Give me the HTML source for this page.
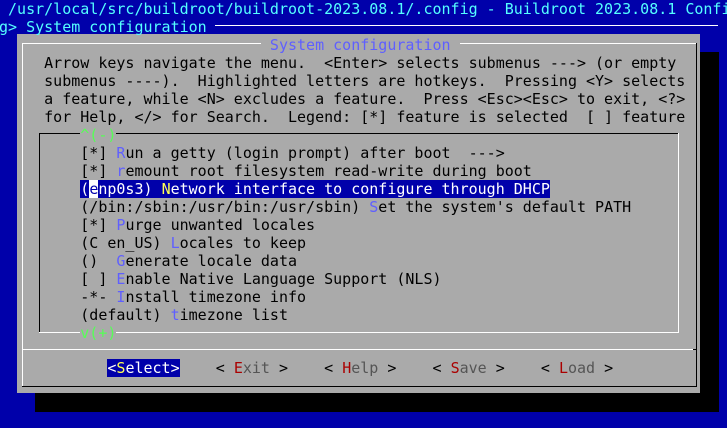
<!DOCTYPE html>
<html><head><meta charset="utf-8"><style>
body{margin:0;width:727px;height:428px;background:#0000aa;position:relative;overflow:hidden;font-family:"DejaVu Sans Mono","Liberation Mono",monospace;font-size:15px;}
.r{position:absolute;left:-1px;white-space:pre;line-height:18px;height:18px;margin:0;color:#000;}
.c{color:#55ffff}
.h{color:#5f5fff}
.g{color:#55ff55}
.w{color:#fff}
.y{color:#ffff55}
.red{color:#aa0000}
.dg{color:#555}
.box{position:absolute}
</style></head><body>
<div class="box" style="left:35px;top:52px;width:684px;height:360px;background:#000"></div>
<div class="box" style="left:17px;top:34px;width:683px;height:359px;background:#aaa"></div>
<div class="box" style="left:22px;top:43px;width:674px;height:1px;background:#fff"></div>
<div class="box" style="left:22px;top:43px;width:1px;height:343px;background:#fff"></div>
<div class="box" style="left:22px;top:386px;width:675px;height:1px;background:#000"></div>
<div class="box" style="left:696px;top:43px;width:1px;height:344px;background:#000"></div>
<div class="box" style="left:22px;top:349px;width:672px;height:1px;background:#fff"></div>
<div class="box" style="left:693px;top:349px;width:4px;height:1px;background:#000"></div>
<div class="box" style="left:39px;top:133px;width:639px;height:1px;background:#000"></div>
<div class="box" style="left:39px;top:133px;width:1px;height:199px;background:#000"></div>
<div class="box" style="left:39px;top:332px;width:640px;height:1px;background:#fff"></div>
<div class="box" style="left:678px;top:133px;width:1px;height:200px;background:#fff"></div>
<div class="box" style="left:215px;top:25px;width:503px;height:1px;background:#fff"></div>

<div class="r c" style="top:0"> /usr/local/src/buildroot/buildroot-2023.08.1/.config - Buildroot 2023.08.1 Confi</div>
<div class="r c" style="top:18px">g&gt; System configuration</div>
<div class="r" style="top:36px">                             <span style="background:#aaa" class="h"> System configuration </span></div>
<div class="r" style="top:54px">     Arrow keys navigate the menu.  &lt;Enter&gt; selects submenus ---&gt; (or empty</div>
<div class="r" style="top:72px">     submenus ----).  Highlighted letters are hotkeys.  Pressing &lt;Y&gt; selects</div>
<div class="r" style="top:90px">     a feature, while &lt;N&gt; excludes a feature.  Press &lt;Esc&gt;&lt;Esc&gt; to exit, &lt;?&gt;</div>
<div class="r" style="top:108px">     for Help, &lt;/&gt; for Search.  Legend: [*] feature is selected  [ ] feature</div>
<div class="r" style="top:126px">         <span class="g" style="background:#aaa">^(-)</span></div>
<div class="r" style="top:144px">         [*] <span class="h">R</span>un a getty (login prompt) after boot  ---&gt;</div>
<div class="r" style="top:162px">         [*] <span class="h">r</span>emount root filesystem read-write during boot</div>
<div class="r" style="top:180px">         <span style="background:#0000aa" class="w">(<span style="background:#fff;color:#0000aa">e</span>np0s3) <span class="y">N</span>etwork interface to configure through DHCP</span></div>
<div class="r" style="top:198px">         (/bin:/sbin:/usr/bin:/usr/sbin) <span class="h">S</span>et the system's default PATH</div>
<div class="r" style="top:216px">         [*] <span class="h">P</span>urge unwanted locales</div>
<div class="r" style="top:234px">         (C en_US) <span class="h">L</span>ocales to keep</div>
<div class="r" style="top:252px">         ()  <span class="h">G</span>enerate locale data</div>
<div class="r" style="top:270px">         [ ] <span class="h">E</span>nable Native Language Support (NLS)</div>
<div class="r" style="top:288px">         -*- <span class="h">I</span>nstall timezone info</div>
<div class="r" style="top:306px">         (default) <span class="h">t</span>imezone list</div>
<div class="r" style="top:324px">         <span class="g" style="background:#aaa">v(+)</span></div>
<div class="r" style="top:359px">            <span style="background:#0000aa" class="w">&lt;<span class="y">S</span>elect&gt;</span>    &lt; <span class="red">E</span><span class="dg">xit</span> &gt;    &lt; <span class="red">H</span><span class="dg">elp</span> &gt;    &lt; <span class="red">S</span><span class="dg">ave</span> &gt;    &lt; <span class="red">L</span><span class="dg">oad</span> &gt;</div>
</body></html>
